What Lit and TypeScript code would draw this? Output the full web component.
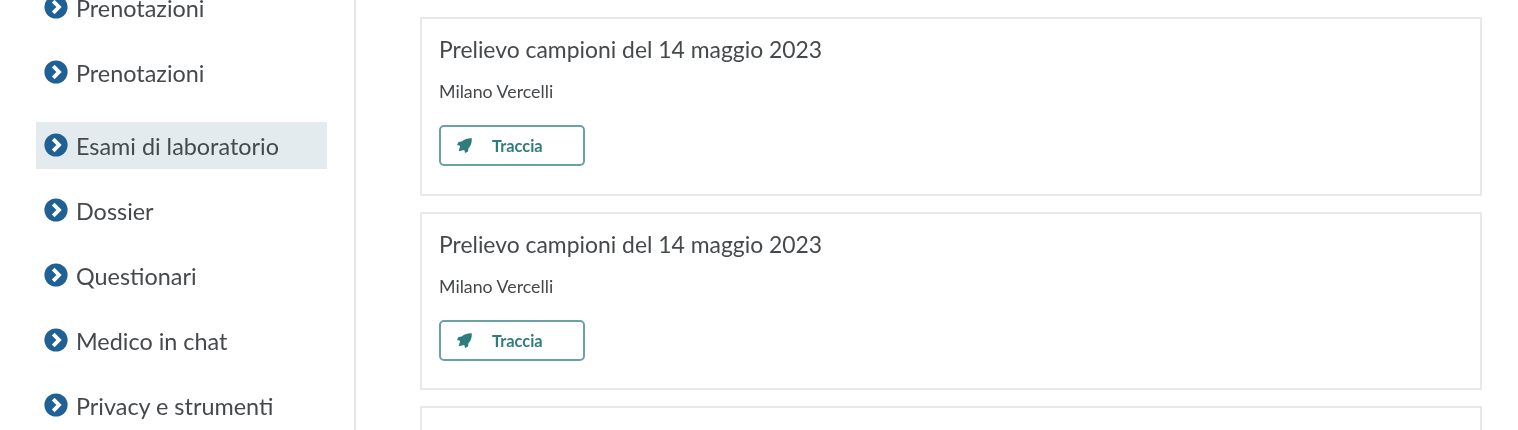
import { LitElement, html, css } from "lit";
import { customElement } from "lit/decorators.js";

const chevron = html`<svg class="chev" viewBox="0 0 24 24" aria-hidden="true">
  <circle cx="12" cy="12" r="11.6" fill="#1f6195"></circle>
  <path d="M9.2 6.200 L15 12 L9.200 17.800" fill="none" stroke="#fff" stroke-width="3.800" stroke-linejoin="miter"></path>
</svg>`;

const rocket = html`<svg class="rocket" viewBox="0 0 16 16" aria-hidden="true">
  <path fill="#2f7c7e" d="M15.800.2C11 0 7.200 1.400 5 3.800L1.600 4.200 0 7.400l3.200.8-.2 1.400-1.200 4.600 4.600-1.200 1.400-.2.800 3.200 3.200-1.600.4-3.400C14.600 8.800 16 5 15.800.2z"></path>
</svg>`;

const NAV = [
  { label: "Prenotazioni" },
  { label: "Prenotazioni", gapAfter: true },
  { label: "Esami di laboratorio", active: true },
  { label: "Dossier" },
  { label: "Questionari" },
  { label: "Medico in chat" },
  { label: "Privacy e strumenti" },
];

@customElement("app-root")
export class AppRoot extends LitElement {
  static styles = css`
    :host {
      display: block;
      height: 430px;
      overflow: hidden;
      background: #fff;
      color: #45494c;
      font-family: "Lato", "Noto Sans", sans-serif;
    }
    .page {
      display: flex;
      align-items: flex-start;
      height: 430px;
      overflow: hidden;
      filter: blur(0.45px);
    }
    .side {
      box-sizing: border-box;
      flex: 0 0 356px;
      width: 356px;
      height: 430px;
      border-right: 2px solid #e6e6e6;
      padding: 0 27px 0 36px;
    }
    .nav {
      list-style: none;
      margin: -16px 0 0;
      padding: 0;
      display: flex;
      flex-direction: column;
      gap: 18px;
    }
    .item {
      display: flex;
      align-items: center;
      gap: 8px;
      height: 47px;
      padding-left: 8px;
      font-size: 23.400px;
      white-space: nowrap;
    }
    .item.gap { margin-bottom: 8px; }
    .item.active { background: #e4ebef; }
    .chev { width: 24px; height: 24px; flex: none; margin-top: -1px; }
    .main {
      flex: 1;
      min-width: 0;
      padding: 17px 36px 0 64px;
      display: flex;
      flex-direction: column;
      gap: 16px;
    }
    .card {
      box-sizing: border-box;
      height: 178.700px;
      flex: none;
      border: 2px solid #e8e8e8;
      padding: 15px 17px;
    }
    .title {
      margin: 0;
      font-size: 22.900px;
      line-height: 30px;
      font-weight: 400;
    }
    .sub {
      margin: 15px 0 0;
      font-size: 17.800px;
      line-height: 24px;
    }
    .btn {
      box-sizing: border-box;
      display: flex;
      align-items: center;
      width: 146px;
      height: 41px;
      margin-top: 22px;
      padding: 0 0 0 16px;
      border: 2px solid #6aa1a3;
      border-radius: 5px;
      background: #fff;
      color: #2f7c7e;
      font: 700 16.400px "Lato", sans-serif;
    }
    .rocket { width: 15px; height: 15px; flex: none; margin-right: 20px; }
  `;

  render() {
    return html`<div class="page">
      <aside class="side">
        <ul class="nav">
          ${NAV.map(
            (n) => html`<li class="item ${n.active ? "active" : ""} ${n.gapAfter ? "gap" : ""}">${chevron}<span>${n.label}</span></li>`
          )}
        </ul>
      </aside>
      <main class="main">
        ${[0, 1, 2].map(
          () => html`<section class="card">
            <h3 class="title">Prelievo campioni del 14 maggio 2023</h3>
            <p class="sub">Milano Vercelli</p>
            <button class="btn">${rocket}<span>Traccia</span></button>
          </section>`
        )}
      </main>
    </div>`;
  }
}
